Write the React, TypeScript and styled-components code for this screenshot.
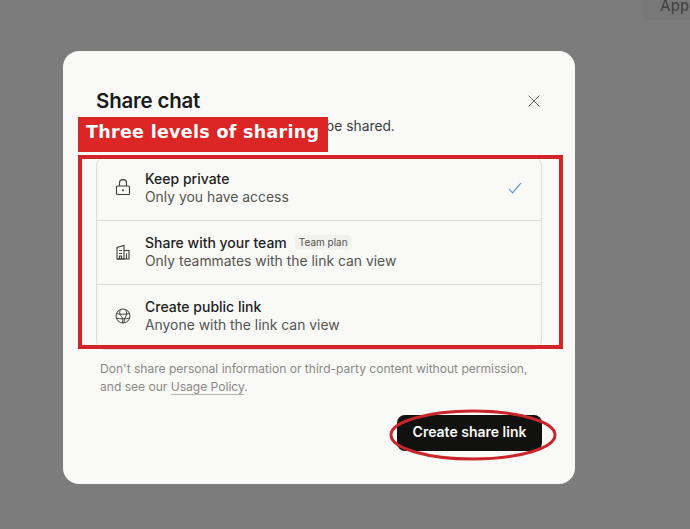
import React from 'react'
import styled, { createGlobalStyle } from 'styled-components'

const GlobalStyle = createGlobalStyle`
    html, body {
        margin: 0;
        padding: 0;
        background: #7c7c7c;
    }
    * {
        box-sizing: border-box;
    }
`

const Page = styled.div`
    position: relative;
    width: 690px;
    height: 529px;
    overflow: hidden;
    background: #7c7c7c;
    font-family: 'Inter', 'Liberation Sans', sans-serif;
    padding: 51px 115px 45px 63px;
`

const GhostButton = styled.div`
    position: absolute;
    top: -10px;
    right: -12px;
    width: 60px;
    height: 30px;
    padding: 6px 0 0 18px;
    border-radius: 6px;
    background: #787878;
    color: #454545;
    font-size: 15px;
    font-weight: 500;
    filter: blur(0.7px);
`

const Modal = styled.div`
    position: relative;
    width: 512px;
    height: 433px;
    padding: 37px 33px 0;
    background: #f9f9f7;
    border-radius: 16px;
    display: flex;
    flex-flow: column;
`

const Header = styled.div`
    display: flex;
    align-items: center;
    justify-content: space-between;
    height: 26px;
`

const Title = styled.h2`
    margin: 0;
    font-size: 20.5px;
    line-height: 26px;
    font-weight: 600;
    letter-spacing: -0.2px;
    color: #1a1a18;
`

const CloseButton = styled.button`
    display: flex;
    border: 0;
    padding: 0;
    margin-right: 2px;
    background: none;
    color: #6f6f6b;
`

const Subtitle = styled.p`
    margin: 2px 0 0;
    font-size: 13.8px;
    line-height: 20px;
    color: #3d3d3a;
`

const OptionList = styled.div`
    margin-top: 20px;
    border: 1px solid #dcdcd8;
    border-radius: 10px;
    display: flex;
    flex-flow: column;
`

const Option = styled.div<{ $last?: boolean }>`
    height: 64px;
    padding: 0 19px 2px 18px;
    display: flex;
    align-items: center;
    gap: 14px;
    border-bottom: ${p => (p.$last ? 'none' : '1px solid #dcdcd8')};
`

const IconSlot = styled.div`
    display: flex;
    width: 16px;
    justify-content: center;
    color: #3d3d3a;
`

const OptionText = styled.div`
    flex: 1;
    display: flex;
    flex-flow: column;
`

const OptionTitleRow = styled.div`
    display: flex;
    align-items: center;
    gap: 8px;
`

const OptionTitle = styled.span`
    font-size: 14px;
    line-height: 19px;
    font-weight: 500;
    color: #1f1f1d;
`

const OptionHint = styled.span`
    font-size: 13.9px;
    line-height: 19px;
    color: #55554f;
`

const PlanTag = styled.span`
    padding: 1px 4px;
    border-radius: 4px;
    background: #f1f1ee;
    font-size: 10px;
    line-height: 13px;
    color: #55554f;
`

const Disclaimer = styled.p`
    margin: 10px 0 0 4px;
    font-size: 12.05px;
    line-height: 18px;
    color: #8a8a85;
`

const PolicyLink = styled.span`
    border-bottom: 1px solid #b5b5b0;
`

const Footer = styled.div`
    margin-top: 19px;
    display: flex;
    justify-content: flex-end;
`

const ShareButton = styled.button`
    width: 145px;
    height: 36px;
    border: 0;
    border-radius: 8px;
    padding: 0 0 3px;
    background: #111110;
    color: #fafaf8;
    font-family: inherit;
    font-size: 14px;
    font-weight: 600;
`

const SectionLabel = styled.div`
    position: absolute;
    left: 78px;
    top: 117px;
    width: 250px;
    height: 35px;
    padding-left: 8px;
    background: #dc2626;
    color: #fff;
    font-family: 'DejaVu Sans', sans-serif;
    font-size: 17.5px;
    font-weight: 700;
    line-height: 30px;
    letter-spacing: 0.3px;
`

const SectionFrame = styled.div`
    position: absolute;
    left: 78px;
    top: 155px;
    width: 485px;
    height: 194px;
    border: 4px solid #d32528;
`

const ButtonRing = styled.svg`
    position: absolute;
    left: 388px;
    top: 408px;
`

const LockIcon = () => (
    <svg width="16" height="17" viewBox="0 0 16 17" fill="none" stroke="currentColor" strokeWidth="1.1">
        <rect x="1.500" y="7" width="13" height="8.500" rx="1" />
        <path d="M4.500 7V3.800a3.500 3.200 0 0 1 7 0V7" />
        <circle cx="8" cy="11.200" r="1" fill="currentColor" stroke="none" />
    </svg>
)

const BuildingIcon = () => (
    <svg width="16" height="16" viewBox="0 0 16 16" fill="none" stroke="currentColor" strokeWidth="1.1">
        <path d="M2 15V3.500L9 1.500V15z" />
        <path d="M9 6.500h5V15H2" />
        <path d="M4 6.500h3M4 9.500h3M4.500 15v-3h2v3M11.500 9.500V15" />
    </svg>
)

const GlobeIcon = () => (
    <svg width="16" height="16" viewBox="0 0 16 16" fill="none" stroke="currentColor" strokeWidth="1">
        <circle cx="8" cy="8" r="7" />
        <path d="M5.500 1.600C3.800 5 5 7 6.500 8.500c1.500 1.500 1.500 3.500 1 6.400" />
        <path d="M10.500 1.600c1.500 2.400 1.500 5 0 7.400-.8 1.300-1.500 3.500-1.300 5.700" />
        <path d="M1.500 5.500c3.500 1 8.500 1 13 0M1.300 10c4 1.200 9 1.200 13.400 0" />
    </svg>
)

const CheckIcon = () => (
    <svg width="14" height="12" viewBox="0 0 14 12" fill="none" stroke="#4a8fd0" strokeWidth="1.100">
        <path d="M1 7l3.500 3.800L13 1" />
    </svg>
)

const CloseIcon = () => (
    <svg width="12" height="12" viewBox="0 0 12 12" fill="none" stroke="currentColor" strokeWidth="1">
        <path d="M.5.500l11 11M11.500.500l-11 11" />
    </svg>
)

export default function App() {
    return (
        <Page>
            <GlobalStyle />
            <GhostButton>App</GhostButton>
            <Modal>
                <Header>
                    <Title>Share chat</Title>
                    <CloseButton><CloseIcon /></CloseButton>
                </Header>
                <Subtitle>Only messages up to this point will be shared.</Subtitle>
                <OptionList>
                    <Option>
                        <IconSlot><LockIcon /></IconSlot>
                        <OptionText>
                            <OptionTitleRow><OptionTitle>Keep private</OptionTitle></OptionTitleRow>
                            <OptionHint>Only you have access</OptionHint>
                        </OptionText>
                        <CheckIcon />
                    </Option>
                    <Option>
                        <IconSlot><BuildingIcon /></IconSlot>
                        <OptionText>
                            <OptionTitleRow>
                                <OptionTitle>Share with your team</OptionTitle>
                                <PlanTag>Team plan</PlanTag>
                            </OptionTitleRow>
                            <OptionHint>Only teammates with the link can view</OptionHint>
                        </OptionText>
                    </Option>
                    <Option $last>
                        <IconSlot><GlobeIcon /></IconSlot>
                        <OptionText>
                            <OptionTitleRow><OptionTitle>Create public link</OptionTitle></OptionTitleRow>
                            <OptionHint>Anyone with the link can view</OptionHint>
                        </OptionText>
                    </Option>
                </OptionList>
                <Disclaimer>
                    Don't share personal information or third-party content without permission,
                    and see our <PolicyLink>Usage Policy</PolicyLink>.
                </Disclaimer>
                <Footer>
                    <ShareButton>Create share link</ShareButton>
                </Footer>
            </Modal>
            <SectionLabel>Three levels of sharing</SectionLabel>
            <SectionFrame />
            <ButtonRing width="170" height="54" viewBox="0 0 170 54" fill="none">
                <ellipse cx="85" cy="27" rx="82" ry="24" stroke="#c9252a" strokeWidth="3" />
            </ButtonRing>
        </Page>
    )
}
